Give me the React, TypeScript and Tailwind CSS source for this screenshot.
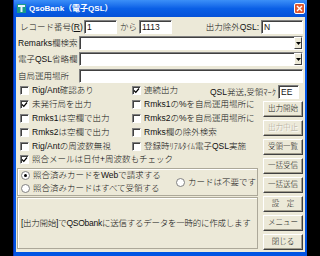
import React from "react";

const sunken =
  "bg-white border border-t-[#808080] border-l-[#808080] border-r-white border-b-white shadow-[inset_1px_1px_0_#404040]";

function Field({ w, text }: { w: string; text?: string }) {
  return (
    <div className={`${w} h-[14px] ${sunken} flex items-center pl-[2px]`}>
      {text}
    </div>
  );
}

function Combo() {
  return (
    <div className={`flex-1 h-[14px] ${sunken} flex justify-end`}>
      <div className="w-[8px] h-full bg-[#ece9d8] border border-t-white border-l-white border-r-[#404040] border-b-[#404040] flex items-center justify-center">
        <svg width="5" height="3" viewBox="0 0 5 3">
          <path d="M0 0h5L2.5 3z" fill="#000" />
        </svg>
      </div>
    </div>
  );
}

function Check({ on, label }: { on?: boolean; label: string }) {
  return (
    <div className="flex items-center gap-[3px] whitespace-nowrap">
      <div className={`w-[9px] h-[9px] ${sunken} flex items-center justify-center`}>
        {on && (
          <svg width="7" height="7" viewBox="0 0 7 7">
            <path d="M1 3.5l1.8 1.8L6 1.5" stroke="#000" strokeWidth="1.2" fill="none" />
          </svg>
        )}
      </div>
      <span>{label}</span>
    </div>
  );
}

function Radio({ on, label }: { on?: boolean; label: string }) {
  return (
    <div className="flex items-center gap-[3px] whitespace-nowrap">
      <div className="w-[9px] h-[9px] rounded-full bg-white border border-[#808080] flex items-center justify-center">
        {on && <div className="w-[3px] h-[3px] rounded-full bg-black" />}
      </div>
      <span>{label}</span>
    </div>
  );
}

function Btn({ label, disabled }: { label: string; disabled?: boolean }) {
  return (
    <div
      className={`h-[16px] text-[7.5px] bg-[#ece9d8] border border-t-white border-l-white border-r-[#404040] border-b-[#404040] shadow-[inset_-1px_-1px_0_#a09c8c] flex items-center justify-center whitespace-nowrap ${
        disabled ? "text-[#aca899] [text-shadow:1px_1px_0_#fff]" : ""
      }`}
    >
      {label}
    </div>
  );
}

export default function App() {
  return (
    <div className="w-[320px] h-[256px] bg-black flex overflow-hidden font-['Liberation_Sans','Noto_Sans_CJK_JP',sans-serif] font-light text-[8.5px] leading-none text-[#111]">
      <div className="ml-[13px] w-[294px] h-[256px] flex flex-col bg-[#0054e3] border-l border-[#0a2fb0]">
        <div className="h-[17px] flex items-center pl-[3px] pr-[2px] bg-gradient-to-b from-[#3b8ff8] via-[#0a5fe6] to-[#0552d8]">
          <svg width="9" height="9" viewBox="0 0 9 9">
            <rect width="9" height="9" fill="#1a9c8c" />
            <rect x="1" y="1" width="7" height="2" fill="#e8f4ff" />
            <rect x="3.5" y="3" width="2" height="5" fill="#e8f4ff" />
          </svg>
          <span className="ml-[3px] text-white font-bold text-[8px]">QsoBank（電子QSL）</span>
          <div className="ml-auto w-[11px] h-[11px] rounded-[2px] bg-[#e0582e] border border-white flex items-center justify-center">
            <svg width="7" height="7" viewBox="0 0 7 7">
              <path d="M1 1l5 5M6 1l-5 5" stroke="#fff" strokeWidth="1.4" />
            </svg>
          </div>
        </div>
        <div className="mx-[2px] mb-[4px] flex-1 bg-[#ece9d8] flex flex-col">
          <div className="flex items-center h-[14px] mt-[3px] pl-[4px] pr-[2px]">
            <span className="w-[64px] whitespace-nowrap">
              レコード番号(<u>R</u>)
            </span>
            <Field w="w-[33px]" text="1" />
            <span className="ml-[3px] w-[16px] whitespace-nowrap">から</span>
            <div className="ml-[3px]">
              <Field w="w-[33px]" text="1113" />
            </div>
            <span className="ml-auto mr-[2px] whitespace-nowrap">出力除外QSL:</span>
            <Field w="w-[42px]" text="N" />
          </div>
          <div className="flex items-center h-[14px] mt-[2px] pl-[2px] pr-[2px]">
            <span className="w-[61px] whitespace-nowrap">Remarks欄検索</span>
            <Combo />
          </div>
          <div className="flex items-center h-[14px] mt-[2px] pl-[2px] pr-[2px]">
            <span className="w-[61px] whitespace-nowrap">電子QSL省略欄</span>
            <Combo />
          </div>
          <div className="flex items-center h-[14px] mt-[3px] pl-[2px] pr-[2px]">
            <span className="w-[61px] whitespace-nowrap">自局運用場所</span>
            <Field w="flex-1" />
          </div>
          <div className="flex items-center h-[13px] mt-[1px] pl-[4px] pr-[6px]">
            <div className="w-[112px]">
              <Check label="Rig/Ant確認あり" />
            </div>
            <Check on label="連続出力" />
            <span className="ml-auto mr-[2px] mt-[3px] whitespace-nowrap">QSL発送,受領ﾏｰｸ</span>
            <div className="mt-[3px]">
              <Field w="w-[21px]" text="EE" />
            </div>
          </div>
          <div className="flex flex-1">
            <div className="w-[244px] flex flex-col">
              {[
                ["未発行局を出力", true, "Rmks1の%を自局運用場所に"],
                ["Rmks1は空欄で出力", false, "Rmks2の%を自局運用場所に"],
                ["Rmks2は空欄で出力", false, "Rmks欄の除外検索"],
                ["Rig/Antの周波数無視", false, "登録時ﾘｱﾙﾀｲﾑ電子QSL実施"],
              ].map(([a, on, b]) => (
                <div key={a as string} className="flex items-center h-[14px] pl-[4px]">
                  <div className="w-[112px]">
                    <Check on={on as boolean} label={a as string} />
                  </div>
                  <Check label={b as string} />
                </div>
              ))}
              <div className="flex items-center h-[13px] pl-[4px]">
                <Check on label="照合メールは日付+周波数もチェック" />
              </div>
              <div className="ml-[1px] mt-[2px] w-[241px] h-[28px] border border-[#aca899] shadow-[inset_1px_1px_0_#fff] flex items-center pl-[3px]">
                <div className="w-[155px] flex flex-col gap-[4px]">
                  <Radio on label="照合済みカードをWebで請求する" />
                  <Radio label="照合済みカードはすべて受領する" />
                </div>
                <div className="mt-[1px]">
                  <Radio label="カードは不要です" />
                </div>
              </div>
              <div className="ml-[1px] mt-[1px] w-[241px] flex-1 border border-[#aca899] shadow-[inset_1px_1px_0_#fff] flex items-center pl-[3px] mb-[3px] whitespace-nowrap tracking-[-0.25px]">
                [出力開始]でQSObankに送信するデータを一時的に作成します
              </div>
            </div>
            <div className="ml-[3px] w-[40px] pt-[4px] flex flex-col gap-[3px]">
              <Btn label="出力開始" />
              <Btn label="出力中止" disabled />
              <Btn label="受領一覧" />
              <Btn label="一括受信" />
              <Btn label="一括送信" />
              <Btn label="設　定" />
              <Btn label="メニュー" />
              <Btn label="閉じる" />
            </div>
          </div>
        </div>
      </div>
    </div>
  );
}
